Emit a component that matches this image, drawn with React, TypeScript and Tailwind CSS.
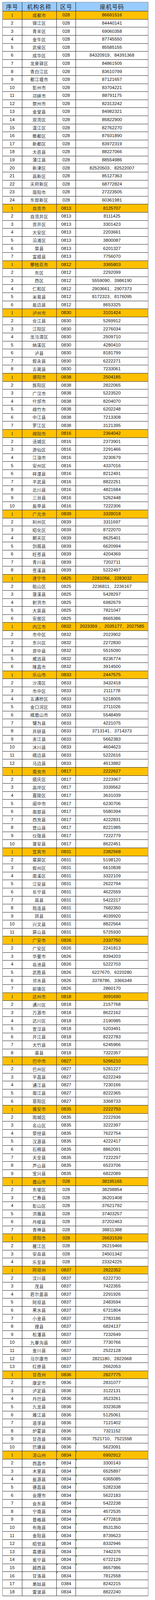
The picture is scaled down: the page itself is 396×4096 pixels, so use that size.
import React from 'react';

// [机构名称, 座机号码, 区号(仅当与本组不同), 绿色角标: 2=区号+号码, 1=仅区号]
type Row = [string, string, string?, number?];
type Group = { code: string; rows: Row[] };

const GROUPS: Group[] = [
  {
    code: '028',
    rows: [
      ['成都市', '86691516'], ['锦江区', '84440141'], ['青羊区', '69060358'], ['金牛区', '87745550'],
      ['武侯区', '85585155'], ['成华区', '84320919、84391368'], ['龙泉驿区', '84861505'], ['青白江区', '83610799'],
      ['都江堰市', '87121657'], ['彭州市', '83704221'], ['邛崃市', '88791175'], ['崇州市', '82313242'],
      ['金堂县', '84982321'], ['双流区', '85822900'], ['温江区', '82762270'], ['郫都区', '87931890'],
      ['新都区', '83972319'], ['大邑县', '88227066'], ['蒲江县', '88554986'], ['新津区', '82520503、82522007'],
      ['高新区', '85127363'], ['天府新区', '68772824'], ['简阳市', '27223505'], ['东部新区', '60361981'],
    ],
  },
  {
    code: '0813',
    rows: [
      ['自贡市', '8125707'], ['自流井区', '8111425'], ['贡井区', '3301423'], ['大安区', '2203661'],
      ['沿滩区', '3800087'], ['荣县', '6201327'], ['富顺县', '7756070'],
    ],
  },
  {
    code: '0812',
    rows: [
      ['攀枝花市', '3365803'], ['东区', '2292099'], ['西区', '5559090、3986190'], ['仁和区', '2903661、2907373'],
      ['米易县', '8172323、8176095'], ['盐边县', '8653325'],
    ],
  },
  {
    code: '0830',
    rows: [
      ['泸州市', '3101424'], ['合江县', '5269912'], ['江阳区', '2276034'], ['龙马潭区', '2509710'],
      ['纳溪区', '4280410'], ['泸县', '8181799'], ['叙永县', '6222271'], ['古蔺县', '7233061'],
    ],
  },
  {
    code: '0838',
    rows: [
      ['德阳市', '2504185'], ['旌阳区', '2822065'], ['广汉市', '5223520'], ['什邡市', '8204070'],
      ['绵竹市', '6202248'], ['中江县', '7213308'], ['罗江区', '3121395'],
    ],
  },
  {
    code: '0816',
    rows: [
      ['绵阳市', '2364042'], ['涪城区', '2373901'], ['游仙区', '2291466'], ['江油市', '3230679'],
      ['安州区', '4337016'], ['梓潼县', '8212491'], ['平武县', '8822251'], ['北川县', '4821684'],
      ['三台县', '5262448'], ['盐亭县', '7222306'],
    ],
  },
  {
    code: '0839',
    rows: [
      ['广元市', '3328018'], ['利州区', '3311697'], ['昭化区', '8722070'], ['朝天区', '8625401'],
      ['剑阁县', '6620994'], ['旺苍县', '4204369'], ['青川县', '7202711'], ['苍溪县', '5222497'],
    ],
  },
  {
    code: '0825',
    rows: [
      ['遂宁市', '2281056、2283032'], ['船山区', '2236811、2236167'], ['蓬溪县', '5428297'],
      ['射洪市', '6982679'], ['大英县', '7821047'], ['安居区', '8665386'],
    ],
  },
  {
    code: '0832',
    rows: [
      ['内江市', '2023359 、 2035177、2027585'], ['市中区', '2023902'], ['东兴区', '2272830'],
      ['资中县', '5515090'], ['威远县', '8236774'], ['隆昌市', '3914500'],
    ],
  },
  {
    code: '0833',
    rows: [
      ['乐山市', '2447575'], ['沙湾区', '3432418'], ['市中区', '2111778'], ['五通桥区', '5218005'],
      ['金口河区', '2711026'], ['峨眉山市', '5548499'], ['犍为县', '4221075'], ['井研县', '3713141、3714373'],
      ['夹江县', '5662383'], ['沐川县', '4604623'], ['峨边县', '5222616'], ['马边县', '4513882'],
    ],
  },
  {
    code: '0817',
    rows: [
      ['南充市', '2222627'], ['顺庆区', '2223967'], ['高坪区', '3339562'], ['嘉陵区', '3631039'],
      ['阆中市', '6230706'], ['南部县', '5580394'], ['西充县', '4222831'], ['营山县', '8221985'],
      ['仪陇县', '7222779'], ['蓬安县', '8622451'],
    ],
  },
  {
    code: '0831',
    rows: [
      ['宜宾市', '2382568'], ['翠屏区', '5198120'], ['叙州区', '6610838'], ['南溪区', '3322109'],
      ['江安县', '2622794'], ['长宁县', '4622559'], ['高县', '5422217'], ['筠连县', '7682350'],
      ['珙县', '4039920'], ['兴文县', '8822564'], ['屏山县', '5725930'],
    ],
  },
  {
    code: '0826',
    rows: [
      ['广安市', '2337750'], ['广安区', '2241813'], ['华蓥市', '8394203'], ['岳池县', '5222703'],
      ['武胜县', '6227670、6220280'], ['邻水县', '3378786、3366349'], ['前锋区', '2860170'],
    ],
  },
  {
    code: '0818',
    rows: [
      ['达州市', '3091690'], ['通川区', '2157768'], ['万源市', '8622162'], ['达川区', '2190985'],
      ['宣汉县', '5203491'], ['开江县', '8222783'], ['大竹县', '6245966'], ['渠县', '7322357'],
    ],
  },
  {
    code: '0827',
    rows: [
      ['巴中市', '5266210'], ['巴州区', '5281227'], ['平昌县', '6222249'], ['通江县', '7230166'],
      ['南江县', '8222365'], ['恩阳区', '3368733'],
    ],
  },
  {
    code: '0835',
    rows: [
      ['雅安市', '2222793'], ['雨城区', '2222936'], ['名山区', '3222397'], ['荥经县', '7622754'],
      ['汉源县', '4222417'], ['石棉县', '8862091'], ['天全县', '7222297'], ['芦山县', '6523706'],
      ['宝兴县', '6822089'],
    ],
  },
  {
    code: '028',
    rows: [
      ['眉山市', '38195165'], ['东坡区', '38298854'], ['仁寿县', '36201408'], ['彭山区', '37621792'],
      ['洪雅县', '37403257'], ['丹棱县', '37202463'], ['青神县', '38811388'],
    ],
  },
  {
    code: '028',
    rows: [['资阳市', '26631539'], ['雁江区', '26219466'], ['安岳县', '24501342'], ['乐至县', '23324225']],
  },
  {
    code: '0837',
    rows: [
      ['阿坝州', '2822352'], ['汶川县', '6222730'], ['茂县', '7422355'], ['若尔盖县', '2291926'],
      ['阿坝县', '2483594'], ['黑水县', '6721804'], ['小金县', '2783186'], ['理县', '6824137'],
      ['松潘县', '7232649'], ['九寨沟县', '7730766'], ['金川县', '2522128'], ['马尔康市', '2821180、2822668'],
      ['红原县', '2662053'],
    ],
  },
  {
    code: '0836',
    rows: [
      ['甘孜州', '2827775'], ['康定市', '2831077'], ['泸定县', '3122131'], ['丹巴县', '3523261'],
      ['九龙县', '3323638'], ['雅江县', '5125061'], ['道孚县', '7121402'], ['炉霍县', '7321152'],
      ['甘孜县', '7521710、7521558'], ['巴塘县', '5623091', undefined, 2],
    ],
  },
  {
    code: '0834',
    rows: [
      ['凉山州', '6992912', undefined, 2], ['西昌市', '3300143', undefined, 2], ['木里县', '6525897', undefined, 2],
      ['盐源县', '6365085', undefined, 2], ['德昌县', '5282338', undefined, 2], ['会理市', '5622183', undefined, 2],
      ['会东县', '5422238', undefined, 2], ['宁南县', '4572535', undefined, 2], ['普格县', '4772818', undefined, 2],
      ['布拖县', '8531350', undefined, 2], ['金阳县', '8739623', undefined, 2], ['昭觉县', '8332946', undefined, 2],
      ['喜德县', '7442376', undefined, 2], ['冕宁县', '6722129', undefined, 2], ['越西县', '8657986', undefined, 2],
      ['甘洛县', '7812558', undefined, 1], ['美姑县', '8242215', '0384'], ['雷波县', '8822240'],
    ],
  },
];

const num = { fontFamily: '"Liberation Sans", Arial, sans-serif' };
const cjk = { fontFamily: '"Noto Sans CJK SC", "Noto Sans", sans-serif' };
const serif = { fontFamily: '"Liberation Serif", "Times New Roman", serif' };

function Tri() {
  return (
    <span className="absolute left-0 top-0 h-0 w-0 border-t-[3px] border-r-[3px] border-t-[#1f8a1f] border-r-transparent" />
  );
}

function DataRow({ idx, row, code }: { idx: number; row: Row; code: string }) {
  const [name, phone, codeOverride, tri] = row;
  const head = idx === 0;
  return (
    <div className={`flex h-[20.6px] border-b border-[#222] ${head ? 'bg-[#ffc000]' : 'bg-white'}`}>
      <div className="flex w-[50px] items-center justify-center border-r border-[#222]">
        {head ? (
          <span style={serif} className="text-[12px] text-[#222]">1</span>
        ) : (
          <span style={num} className="text-[11.5px] text-[#111]">{idx + 1}</span>
        )}
      </div>
      <div className="flex w-[88.3px] items-center justify-center border-r border-[#222]">
        <span style={cjk} className="text-[11px] tracking-[0.5px] text-[#333]">{name}</span>
      </div>
      <div className="relative flex w-[49.7px] items-center justify-center border-r border-[#222]">
        {tri ? <Tri /> : null}
        <span style={num} className="text-[11.5px] text-[#111]">{codeOverride ?? code}</span>
      </div>
      <div className="relative flex flex-1 items-center justify-center">
        {tri === 2 ? <Tri /> : null}
        <span style={num} className="whitespace-pre text-[11.5px] text-[#111]">{phone}</span>
      </div>
    </div>
  );
}

export default function App() {
  return (
    <div className="min-h-[4096px] bg-white pl-[5.5px] pt-[5px]">
      <div className="w-[373px] border-l border-r border-[#7a7a7a]">
        {/* 表头 */}
        <div className="flex h-[24.2px] border-t border-b border-t-[#8a8a8a] border-b-[#222] bg-[#99ccff]">
          <div className="flex w-[50px] items-center justify-center border-r border-[#222]">
            <span style={cjk} className="text-[14.5px] tracking-[1px] text-[#222]">序号</span>
          </div>
          <div className="flex w-[88.3px] items-center justify-center border-r border-[#222]">
            <span style={cjk} className="text-[14.5px] tracking-[1px] text-[#222]">机构名称</span>
          </div>
          <div className="flex w-[49.7px] items-center justify-center border-r border-[#222]">
            <span style={cjk} className="text-[14.5px] tracking-[1px] text-[#222]">区号</span>
          </div>
          <div className="flex flex-1 items-center justify-center">
            <span style={cjk} className="text-[14.5px] tracking-[1px] text-[#222]">座机号码</span>
          </div>
        </div>
        {GROUPS.map((g, gi) =>
          g.rows.map((r, i) => <DataRow key={`${gi}-${i}`} idx={i} row={r} code={g.code} />)
        )}
      </div>
    </div>
  );
}
